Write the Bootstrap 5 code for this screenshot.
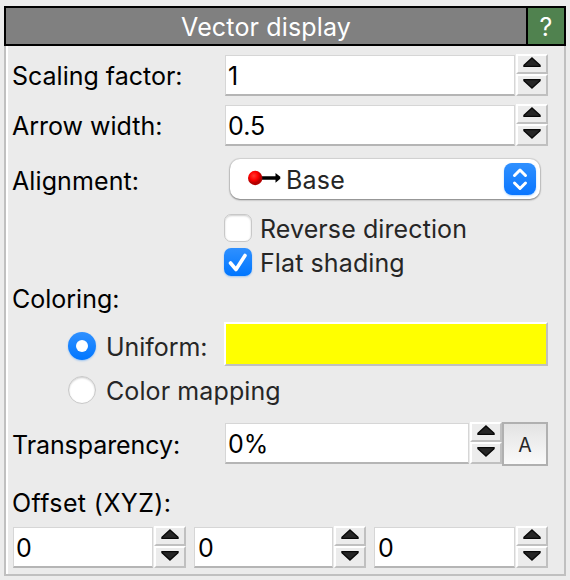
<!DOCTYPE html>
<html lang="en">
<head>
<meta charset="utf-8">
<title>Vector display</title>
<link href="https://cdn.jsdelivr.net/npm/bootstrap@5.3.0/dist/css/bootstrap.min.css" rel="stylesheet">
<style>
body{background:#ececec;font-family:Inter,"Liberation Sans",sans-serif;font-size:25px;line-height:30px;color:#000;width:570px;height:580px;overflow:hidden;padding:6px 4px 4px}
.rollout{width:562px;height:570px}
.titlebar{height:40px;border:2px solid #000;background:#808080;color:#fff}
.titlebar>div{padding-top:4px}
.title-text{letter-spacing:.15px}
.help{width:38px;border-left:2px solid #000;background:#50824f}
.panel{height:530px;border:2px solid #c0c0c0;border-top:0;background:#ebebeb;box-shadow:inset 2px 0 #fff;padding:8px 16px 0 6px}
.cap{width:212px;white-space:nowrap}
.line{height:42px}
.line>.cap{padding-top:2px}
.align-line{margin-top:12px}
.align-line>.cap{padding-top:4px;letter-spacing:.1px}
.spin{height:42px}
.field{height:41px;margin:1px 1px 0;border:1px solid #d6d6d6;border-bottom:2px solid #b5b5b5;background:#fff;padding:5px 0 0 2px;min-width:0}
.arrows{width:32px}
.arrows span{height:20px;border:2px solid;border-color:#fff #c0c0c0 #c0c0c0 #fff;background:#ececec;display:flex;justify-content:center}
.arrows span+span{height:22px}
.arrows svg{width:18px;height:10px;margin-top:1px}
.arrows span+span svg{margin-top:3px}
.combo{width:310px;height:40px;margin:1px 0 1px 6px;border-radius:10px;background:#fff;box-shadow:0 0 1px 1px #0000001a,0 1px 2px #00000066;color:#262626;padding:0 4px 0 18px}
.base{padding-top:2px;letter-spacing:.2px}
.pin{margin-top:-3px}
.stepper{width:32px;height:32px;border-radius:8px;background:linear-gradient(#2f90ff,#0a76ff);box-shadow:0 1px 2px #007aff55}
.mark-box{width:28px;height:28px;border-radius:7px;background:#fff;border:1px solid #c8c8c8;box-shadow:inset 0 1px 2px #00000033;flex:none}
.mark-box.round{border-radius:50%}
.mark-box.on{border:0;background:linear-gradient(#2f90ff,#0076ff);box-shadow:0 1px 2px #007aff55}
.opt{height:28px;color:#262626;white-space:nowrap;letter-spacing:.1px}
.opt>span+span{padding-top:2px}
.indent{margin-left:212px}
.first{margin-top:14px}
.second{margin-top:6px}
.radio{padding-left:56px;gap:10px}
.uniform{margin-top:4px;letter-spacing:-.05px}
.lower{margin-top:10px}
.swatch{width:324px;height:44px;border:2px solid;border-color:#fff #c0c0c0 #c0c0c0 #fff;background:#ff0}
.transp{margin-top:18px}
.transp>.cap{padding-top:8px;letter-spacing:-.08px}
.auto{width:46px;height:44px;border:2px solid #b0b0b0;background:linear-gradient(#e3e3e3,#fafafa);font-size:19.5px;color:#262626;padding-top:2px}
.offset-label{margin-top:22px;letter-spacing:.4px}
.xyz{grid-template-columns:174px 172px 174px;column-gap:8px}
.xyz .spin+.spin .field{margin-left:0;padding-left:3px}
</style>
<script src="https://cdn.jsdelivr.net/npm/bootstrap@5.3.0/dist/js/bootstrap.bundle.min.js"></script>
</head>
<body>
<svg width="0" height="0" class="position-absolute"><defs>
<path id="up" d="M9 1 17 8.2V9.5H1V8.2Z" fill="#262626" stroke="#080808" stroke-width="1.4"/>
<path id="down" d="M9 9 17 1.8V.5H1V1.8Z" fill="#262626" stroke="#080808" stroke-width="1.4"/>
</defs></svg>
<main class="rollout">
  <header class="titlebar d-flex">
    <div class="flex-fill text-center title-text">Vector display</div>
    <div class="help text-center">?</div>
  </header>
  <section class="panel">
    <div class="line d-flex align-items-center">
      <div class="cap">Scaling factor:</div>
      <div class="spin d-flex flex-fill"><div class="field flex-fill">1</div><div class="arrows"><span><svg><use href="#up"/></svg></span><span><svg><use href="#down"/></svg></span></div></div>
    </div>
    <div class="line d-flex align-items-center mt-2">
      <div class="cap">Arrow width:</div>
      <div class="spin d-flex flex-fill"><div class="field flex-fill">0.5</div><div class="arrows"><span><svg><use href="#up"/></svg></span><span><svg><use href="#down"/></svg></span></div></div>
    </div>
    <div class="line align-line d-flex align-items-center">
      <div class="cap">Alignment:</div>
      <div class="combo d-flex align-items-center">
        <svg class="pin" width="34" height="16" viewBox="0 0 34 16"><defs><radialGradient id="ball" cx=".4" cy=".35"><stop offset="0" stop-color="#ff3a30"/><stop offset=".6" stop-color="#f00"/><stop offset="1" stop-color="#b40000"/></radialGradient></defs><path d="M13 6.200H27.500V3L32.300 6.800V8.800L27.500 12.800V9.800H13Z" fill="#000"/><circle cx="7.200" cy="8" r="7.200" fill="url(#ball)"/></svg>
        <span class="base ms-1">Base</span>
        <div class="stepper ms-auto"><svg class="d-block" width="32" height="32" fill="none" stroke="#fff" stroke-width="3" stroke-linecap="round" stroke-linejoin="round"><path d="M10.500 12.500 16 7l5.500 5.500M10.500 20 16 25.500 21.500 20"/></svg></div>
      </div>
    </div>
    <div class="opt d-flex align-items-center gap-2 indent first"><span class="mark-box"></span><span>Reverse direction</span></div>
    <div class="opt d-flex align-items-center gap-2 indent second"><span class="mark-box on"><svg class="d-block" width="28" height="28" fill="none" stroke="#fff" stroke-width="3.600" stroke-linecap="round" stroke-linejoin="round"><path d="M6.500 15 12 21.500 21 7.500"/></svg></span><span>Flat shading</span></div>
    <div class="mt-2">Coloring:</div>
    <div class="d-flex align-items-center mt-2">
      <div class="cap opt uniform d-flex radio align-items-center"><span class="mark-box round on d-flex align-items-center justify-content-center"><svg width="12" height="12"><circle cx="6" cy="6" r="6" fill="#fff"/></svg></span><span>Uniform:</span></div>
      <div class="swatch"></div>
    </div>
    <div class="opt d-flex align-items-center radio lower"><span class="mark-box round"></span><span>Color mapping</span></div>
    <div class="d-flex transp">
      <div class="cap">Transparency:</div>
      <div class="spin d-flex flex-fill"><div class="field flex-fill">0%</div><div class="arrows"><span><svg><use href="#up"/></svg></span><span><svg><use href="#down"/></svg></span></div></div>
      <div class="auto d-flex align-items-center justify-content-center">A</div>
    </div>
    <div class="offset-label">Offset (XYZ):</div>
    <div class="xyz d-grid mt-2">
      <div class="spin d-flex"><div class="field flex-fill">0</div><div class="arrows"><span><svg><use href="#up"/></svg></span><span><svg><use href="#down"/></svg></span></div></div>
      <div class="spin d-flex"><div class="field flex-fill">0</div><div class="arrows"><span><svg><use href="#up"/></svg></span><span><svg><use href="#down"/></svg></span></div></div>
      <div class="spin d-flex"><div class="field flex-fill">0</div><div class="arrows"><span><svg><use href="#up"/></svg></span><span><svg><use href="#down"/></svg></span></div></div>
    </div>
  </section>
</main>
</body>
</html>
